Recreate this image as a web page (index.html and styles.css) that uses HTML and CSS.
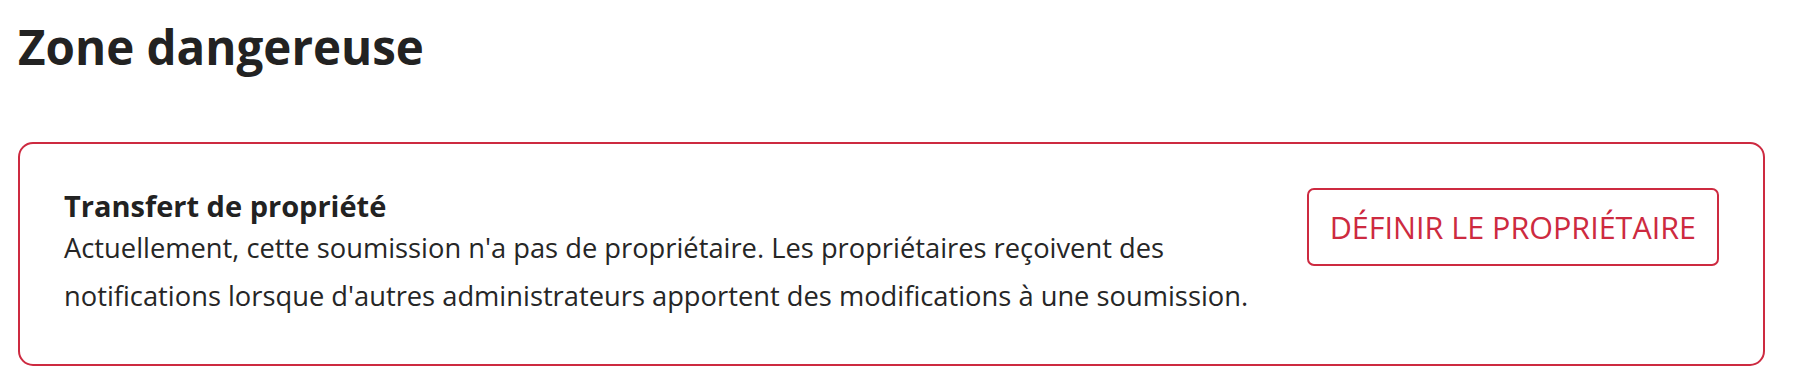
FILE: index.html
```html
<!DOCTYPE html>
<html lang="fr">
<head>
<meta charset="utf-8">
<title>Zone dangereuse</title>
<link rel="stylesheet" href="styles.css">
</head>
<body>
<main class="page">
  <h1 class="page-title">Zone dangereuse</h1>
  <section class="danger-card">
    <div class="danger-text">
      <h2 class="danger-title">Transfert de propriété</h2>
      <p class="danger-desc">Actuellement, cette soumission n'a pas de propriétaire. Les propriétaires reçoivent des<br>notifications lorsque d'autres administrateurs apportent des modifications à une soumission.</p>
    </div>
    <button class="danger-btn" type="button">DÉFINIR LE PROPRIÉTAIRE</button>
  </section>
</main>
</body>
</html>
```
FILE: styles.css
```css
html, body {
  margin: 0;
  padding: 0;
  background: #ffffff;
}

body {
  font-family: "Open Sans", "Noto Sans", sans-serif;
  color: #222222;
}

.page {
  width: 1747px;
  padding: 18px 0 0 18px;
}

.page-title {
  margin: 0;
  font-size: 47.5px;
  font-weight: 700;
  line-height: 58px;
  color: #222222;
}

.danger-card {
  margin-top: 66px;
  border: 2px solid #cd2a40;
  border-radius: 15px;
  padding: 44px;
  display: flex;
  justify-content: space-between;
  align-items: flex-start;
}

.danger-text {
  display: flex;
  flex-direction: column;
}

.danger-title {
  margin: 0;
  font-size: 29px;
  font-weight: 700;
  line-height: 36px;
  color: #222222;
}

.danger-desc {
  margin: 0;
  font-size: 27.3px;
  font-weight: 400;
  line-height: 48px;
  color: #262626;
}

.danger-btn {
  flex: none;
  box-sizing: border-box;
  height: 78px;
  padding: 0 21px;
  border: 2px solid #cd2a40;
  border-radius: 7px;
  background: #ffffff;
  color: #cd2a40;
  font-family: "Open Sans", "Noto Sans", sans-serif;
  font-size: 30.5px;
  font-weight: 400;
  line-height: 36px;
  cursor: pointer;
}
```
